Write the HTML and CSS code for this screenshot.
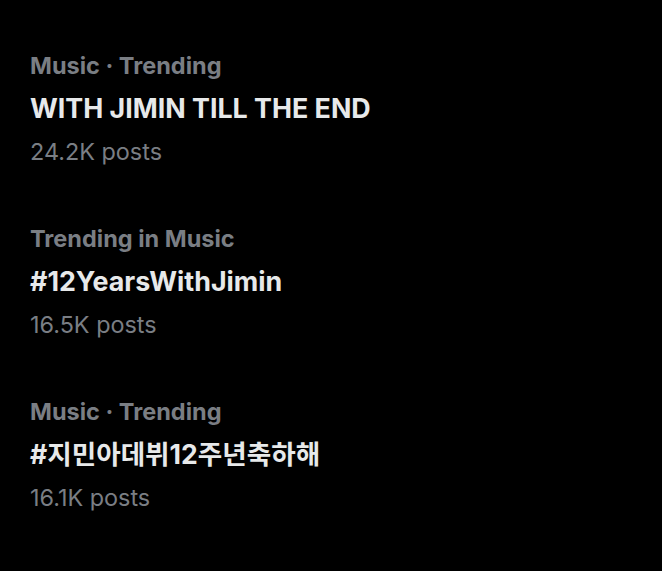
FILE: index.html
```html
<!DOCTYPE html>
<html lang="en">
<head>
<meta charset="utf-8">
<link rel="stylesheet" href="styles.css">
</head>
<body>
<div class="list">
  <div class="item">
    <div class="meta">Music · Trending</div>
    <div class="title">WITH JIMIN TILL THE END</div>
    <div class="count">24.2K posts</div>
  </div>
  <div class="item">
    <div class="meta">Trending in Music</div>
    <div class="title">#12YearsWithJimin</div>
    <div class="count">16.5K posts</div>
  </div>
  <div class="item">
    <div class="meta">Music · Trending</div>
    <div class="title title-ko" lang="ko">#지민아데뷔12주년축하해</div>
    <div class="count">16.1K posts</div>
  </div>
</div>
</body>
</html>
```
FILE: styles.css
```css
html, body {
  margin: 0;
  background: #000;
}
body {
  font-family: Inter, "Noto Sans CJK KR", sans-serif;
  width: 662px;
  height: 571px;
  overflow: hidden;
}
.list {
  display: flex;
  flex-direction: column;
  gap: 44px;
  padding: 44px 30px 0;
}
.item {
  display: flex;
  flex-direction: column;
  line-height: 43px;
}
.meta {
  color: #7a7e84;
  font-size: 23.5px;
  font-weight: 700;
}
.title {
  color: #e7e9ea;
  font-size: 26.8px;
  font-weight: 700;
}
.title-ko {
  font-size: 26.6px;
}
.count {
  color: #7a7e84;
  font-size: 23.4px;
  font-weight: 400;
}
```
